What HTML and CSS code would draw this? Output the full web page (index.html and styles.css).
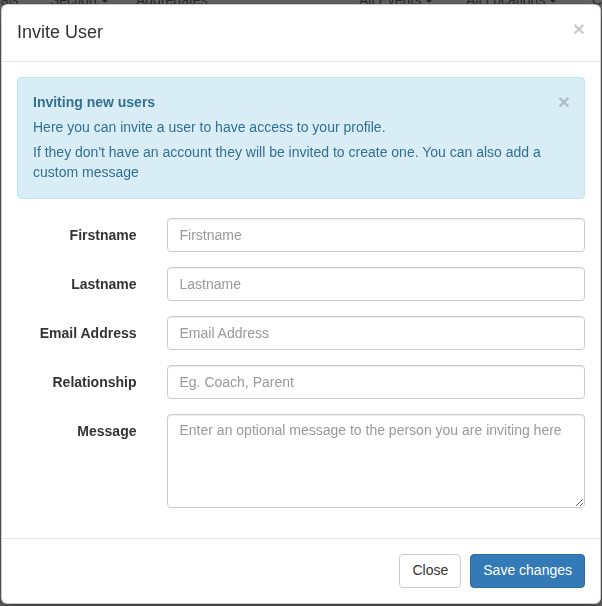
FILE: index.html
```html
<!DOCTYPE html>
<html>
<head>
<meta charset="utf-8">
<link rel="stylesheet" href="styles.css">
</head>
<body>
<div class="page">
  <nav class="topnav">
    <span class="nav-item n1">Goals</span>
    <span class="nav-item n2">Section<span class="caret"></span></span>
    <span class="nav-item n3">Aggregates</span>
    <span class="nav-item n4">All Events<span class="caret"></span></span>
    <span class="nav-item n5">All Locations<span class="caret"></span></span>
    <span class="nav-item n6">C</span>
  </nav>
</div>
<div class="backdrop">
  <div class="modal">
    <div class="modal-header">
      <h4 class="modal-title">Invite User</h4>
      <button class="close" type="button">×</button>
    </div>
    <div class="modal-body">
      <div class="alert">
        <button class="close alert-close" type="button">×</button>
        <strong>Inviting new users</strong>
        <p>Here you can invite a user to have access to your profile.</p>
        <p class="last">If they don't have an account they will be invited to create one. You can also add a custom message</p>
      </div>
      <form class="form">
        <div class="form-group">
          <label class="control-label">Firstname</label>
          <div class="field"><input class="form-control" type="text" placeholder="Firstname"></div>
        </div>
        <div class="form-group">
          <label class="control-label">Lastname</label>
          <div class="field"><input class="form-control" type="text" placeholder="Lastname"></div>
        </div>
        <div class="form-group">
          <label class="control-label">Email Address</label>
          <div class="field"><input class="form-control" type="text" placeholder="Email Address"></div>
        </div>
        <div class="form-group">
          <label class="control-label">Relationship</label>
          <div class="field"><input class="form-control" type="text" placeholder="Eg. Coach, Parent"></div>
        </div>
        <div class="form-group">
          <label class="control-label">Message</label>
          <div class="field"><textarea class="form-control textarea" rows="4" placeholder="Enter an optional message to the person you are inviting here"></textarea></div>
        </div>
      </form>
    </div>
    <div class="modal-footer">
      <button class="btn btn-default" type="button">Close</button>
      <button class="btn btn-primary" type="button">Save changes</button>
    </div>
  </div>
</div>
</body>
</html>
```
FILE: styles.css
```css
* { box-sizing: border-box; }
html, body { margin: 0; padding: 0; }
body {
  width: 602px;
  height: 606px;
  overflow: hidden;
  background: #686868;
  font-family: "Liberation Sans", Arial, sans-serif;
  font-size: 14px;
  line-height: 1.42857;
  color: #333;
}
.page { height: 606px; }
.topnav {
  display: flex;
  margin-top: -10px;
  font-size: 14px;
  line-height: 20px;
  color: #2c2c2c;
  white-space: nowrap;
}
.nav-item { display: block; flex: none; }
.caret {
  display: inline-block;
  width: 0;
  height: 0;
  margin-left: 4px;
  vertical-align: middle;
  border-top: 4px solid #2c2c2c;
  border-left: 4px solid transparent;
  border-right: 4px solid transparent;
}
.n1 { margin-left: -18px; width: 68px; }
.n2 { width: 86px; }
.n3 { width: 223px; }
.n4 { width: 107px; }
.n5 { width: 126px; }
.n6 { width: 20px; }

.backdrop {
  position: fixed;
  inset: 0;
  padding: 4px 1px 0 1px;
}
.modal {
  background: #fff;
  border: 1px solid rgba(0,0,0,.2);
  border-radius: 6px;
  box-shadow: 0 5px 15px rgba(0,0,0,.5);
  width: 600px;
}
.modal-header {
  display: flex;
  justify-content: space-between;
  align-items: flex-start;
  padding: 15px;
  border-bottom: 1px solid #e5e5e5;
}
.modal-title {
  margin: 0;
  font-size: 18px;
  font-weight: 500;
  line-height: 1.42857;
  color: #333;
}
.close {
  background: transparent;
  border: 0;
  padding: 0;
  margin-top: -2px;
  font-family: "Liberation Sans", Arial, sans-serif;
  font-size: 21px;
  font-weight: bold;
  line-height: 1;
  color: #000;
  opacity: .2;
  cursor: pointer;
}
.modal-body { padding: 15px; }
.alert {
  padding: 15px 35px 15px 15px;
  margin-bottom: 19px;
  border: 1px solid #bce8f1;
  border-radius: 4px;
  background: #d9edf7;
  color: #31708f;
}
.alert-close {
  float: right;
  position: relative;
  top: -2px;
  right: -21px;
  margin-top: 0;
}
.alert strong { display: block; }
.alert p { margin: 5px 0 0 0; }

.form { margin: 0 -15px; }
.form-group {
  display: flex;
  margin-bottom: 15px;
}
.control-label {
  width: 25%;
  flex: none;
  padding: 8px 15px 0 15px;
  text-align: right;
  font-weight: bold;
}
.field {
  width: 75%;
  flex: none;
  padding: 0 15px;
}
.form-control {
  display: block;
  width: 100%;
  height: 34px;
  padding: 6px 12px;
  font-family: "Liberation Sans", Arial, sans-serif;
  font-size: 14px;
  line-height: 1.42857;
  color: #555;
  background: #fff;
  border: 1px solid #ccc;
  border-radius: 4px;
  box-shadow: inset 0 1px 1px rgba(0,0,0,.075);
}
.form-control::placeholder { color: #999; }
.textarea {
  height: 94px;
  resize: vertical;
}
.modal-footer {
  display: flex;
  justify-content: flex-end;
  gap: 9px;
  padding: 15px;
  border-top: 1px solid #e5e5e5;
}
.btn {
  display: inline-block;
  height: 34px;
  padding: 6px 12px;
  font-family: "Liberation Sans", Arial, sans-serif;
  font-size: 14px;
  line-height: 1.42857;
  border: 1px solid transparent;
  border-radius: 4px;
}
.btn-default {
  color: #333;
  background: #fff;
  border-color: #ccc;
}
.btn-primary {
  color: #fff;
  background: #337ab7;
  border-color: #2e6da4;
}
```
